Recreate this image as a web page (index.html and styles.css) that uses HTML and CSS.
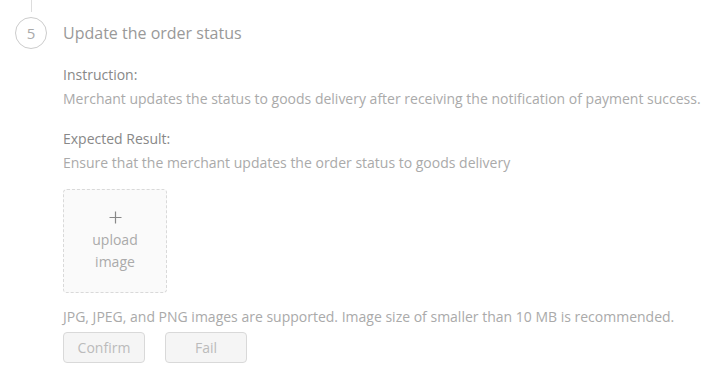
FILE: index.html
```html
<!DOCTYPE html>
<html>
<head>
<meta charset="utf-8">
<link rel="stylesheet" href="styles.css">
</head>
<body>
<div class="step">
  <div class="step-line"></div>
  <div class="step-head">
    <div class="step-num">5</div>
    <div class="step-title">Update the order status</div>
  </div>
  <div class="step-body">
    <div class="block">
      <div class="label">Instruction:</div>
      <div class="desc">Merchant updates the status to goods delivery after receiving the notification of payment success.</div>
    </div>
    <div class="block">
      <div class="label">Expected Result:</div>
      <div class="desc">Ensure that the merchant updates the order status to goods delivery</div>
    </div>
    <div class="upload">
      <svg class="plus" width="13" height="13" viewBox="0 0 13 13"><path d="M6.5 0.5V12.5M0.5 6.5H12.5" stroke="#888" stroke-width="1.2" fill="none"/></svg>
      <span class="upload-text">upload<br>image</span>
    </div>
    <div class="hint">JPG, JPEG, and PNG images are supported. Image size of smaller than 10 MB is recommended.</div>
    <div class="actions">
      <button class="btn">Confirm</button>
      <button class="btn">Fail</button>
    </div>
  </div>
</div>
</body>
</html>
```
FILE: styles.css
```css
html, body {
  margin: 0;
  padding: 0;
  background: #fff;
  font-family: "Open Sans", "Liberation Sans", sans-serif;
}
.step {
  width: 726px;
}
.step-line {
  width: 1px;
  height: 12px;
  margin-left: 31px;
  background: #ddd;
}
.step-head {
  display: flex;
  align-items: center;
  margin-top: 5px;
}
.step-num {
  box-sizing: border-box;
  width: 32px;
  height: 32px;
  margin-left: 15px;
  border: 1px solid #ccc;
  border-radius: 50%;
  display: flex;
  align-items: center;
  justify-content: center;
  font-size: 15px;
  color: #aaa;
}
.step-title {
  margin-left: 16px;
  font-size: 16px;
  color: #999;
}
.step-body {
  padding-left: 63px;
  padding-top: 14px;
}
.block + .block {
  margin-top: 16px;
}
.label {
  font-size: 14px;
  line-height: 24px;
  color: #888;
}
.desc {
  font-size: 14px;
  line-height: 24px;
  color: #aaa;
}
.upload {
  box-sizing: border-box;
  width: 104px;
  height: 104px;
  margin-top: 14px;
  border: 1px dashed #d9d9d9;
  border-radius: 4px;
  background: #fafafa;
  display: flex;
  flex-direction: column;
  align-items: center;
  justify-content: center;
  text-align: center;
}
.plus {
  display: block;
  margin-top: 2px;
  margin-bottom: 5px;
}
.upload-text {
  font-size: 14px;
  line-height: 22px;
  color: #aaa;
}
.hint {
  margin-top: 13px;
  font-size: 14px;
  line-height: 22px;
  color: #aaa;
}
.actions {
  display: flex;
  gap: 20px;
  margin-top: 4px;
}
.btn {
  box-sizing: border-box;
  width: 82px;
  height: 31px;
  border: 1px solid #d9d9d9;
  border-radius: 4px;
  background: #f5f5f5;
  color: #bbb;
  font-family: "Open Sans", "Liberation Sans", sans-serif;
  font-size: 14px;
  padding: 0;
}
```
